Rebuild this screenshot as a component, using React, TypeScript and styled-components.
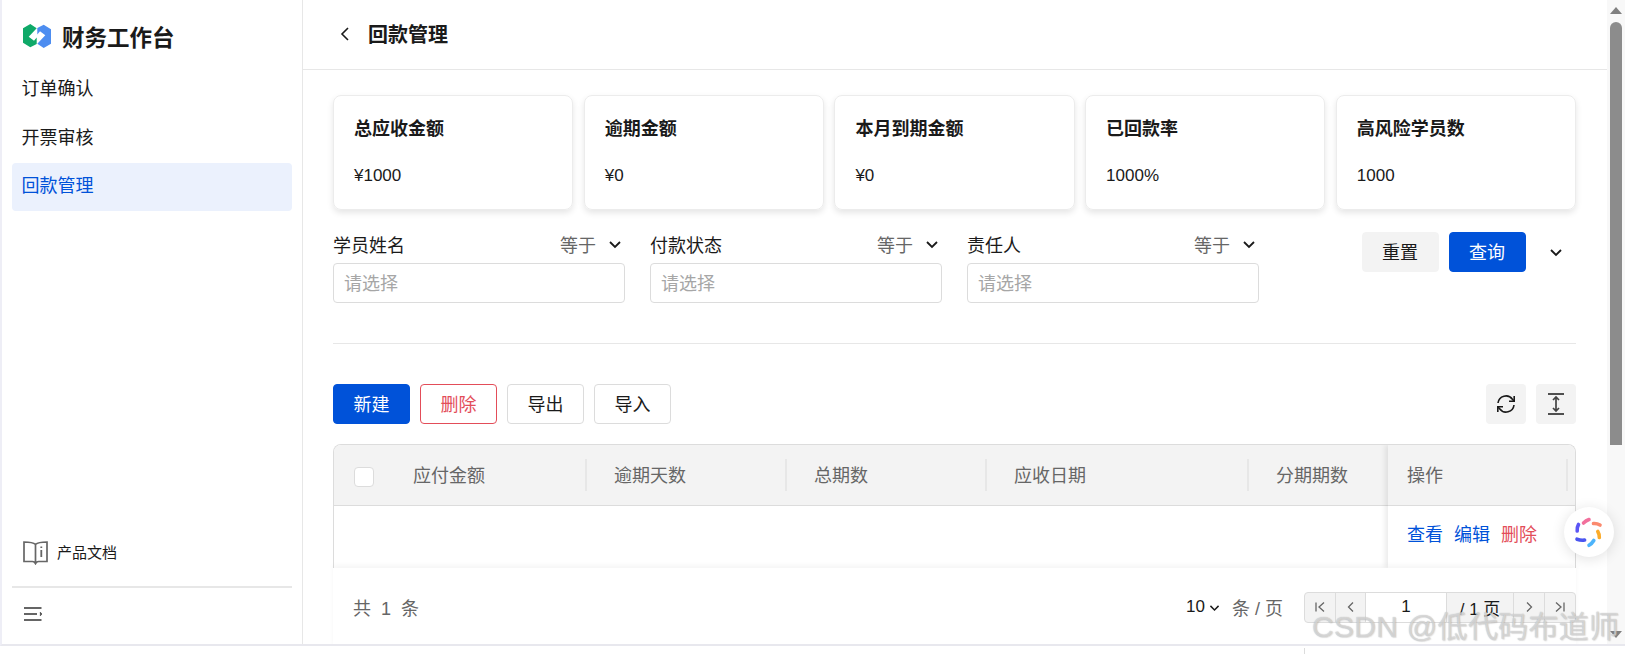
import React from "react";
import styled, { createGlobalStyle } from "styled-components";

const Global = createGlobalStyle`
  html, body { margin: 0; padding: 0; background: #fff; }
  body { font-family: "Liberation Sans", "Noto Sans CJK SC", sans-serif; color: #1a1a1a; }
  * { box-sizing: border-box; }
`;

const Page = styled.div`
  position: relative;
  width: 1625px;
  height: 654px;
  overflow: hidden;
  background: #fff;
`;
const Frame = styled.div`
  display: flex;
  height: 646px;
  border-left: 2px solid #eeeef6;
  border-bottom: 2px solid #e8e8ee;
`;
const Sidebar = styled.aside`
  width: 301px;
  flex: none;
  display: flex;
  flex-direction: column;
  border-right: 1px solid #e7e7e7;
  padding: 0 10px;
`;
const Brand = styled.div`
  display: flex;
  align-items: center;
  height: 63px;
  padding: 8px 0 0 11px;
  gap: 11px;
  font-size: 22.5px;
  font-weight: 700;
`;
const NavItem = styled.div<{ $active?: boolean }>`
  height: 48px;
  margin: ${(p) => (p.$active ? "2px 0 0" : "0 0 1px")};
  padding: 0 0 ${(p) => (p.$active ? 7 : 0)}px 9.5px;
  display: flex;
  align-items: center;
  font-size: 18px;
  border-radius: 4px;
  color: ${(p) => (p.$active ? "#0052d9" : "#1a1a1a")};
  background: ${(p) => (p.$active ? "#ebf1fd" : "transparent")};
`;
const SideFoot = styled.div`
  margin-top: auto;
`;
const DocLink = styled.div`
  display: flex;
  align-items: center;
  gap: 9px;
  padding: 0 0 21px 11px;
  font-size: 15px;
  & > span { padding-bottom: 3px; }
`;
const Collapse = styled.div`
  border-top: 2px solid #e7e7e7;
  height: 58px;
  padding: 19px 0 0 12px;
`;
const Main = styled.main`
  width: 1304px;
  flex: none;
  overflow: hidden;
`;
const Header = styled.header`
  height: 70px;
  display: flex;
  align-items: center;
  gap: 17px;
  padding: 0 0 2px 36px;
  border-bottom: 1px solid #e7e7e7;
  font-size: 20px;
  font-weight: 700;
`;
const Body = styled.div`
  padding: 25px 31px 0 30px;
`;
const Cards = styled.div`
  display: grid;
  grid-template-columns: repeat(5, 1fr);
  gap: 10.5px;
`;
const Card = styled.div`
  height: 115px;
  padding: 21px 20px 0;
  border: 1px solid #ececec;
  border-radius: 8px;
  box-shadow: 0 3px 6px rgba(0, 0, 0, 0.1);
`;
const CardTitle = styled.div`
  font-size: 18px;
  font-weight: 700;
  line-height: 24px;
`;
const CardValue = styled.div`
  font-size: 17px;
  line-height: 24px;
  margin-top: 23px;
`;
const FilterRow = styled.div`
  display: flex;
  gap: 25px;
  margin-top: 22px;
  padding-bottom: 40px;
  border-bottom: 1px solid #e7e7e7;
`;
const Filter = styled.div`
  width: 292px;
`;
const FilterHead = styled.div`
  height: 26px;
  margin-bottom: 5px;
  padding-bottom: 2px;
  display: flex;
  align-items: center;
  font-size: 18px;
`;
const Operator = styled.span`
  margin-left: auto;
  margin-right: 11px;
  color: #666;
`;
const HeadChevron = styled.span`
  display: flex;
  margin-right: 2px;
`;
const Input = styled.div`
  height: 40px;
  border: 1px solid #dcdcdc;
  border-radius: 4px;
  padding: 0 0 3px 10px;
  display: flex;
  align-items: center;
  font-size: 18px;
  color: #a6a6a6;
`;
const Actions = styled.div`
  margin-left: auto;
  display: flex;
  align-items: flex-start;
  gap: 10px;
  padding-right: 12.5px;
`;
const Button = styled.button<{ $kind?: "primary" | "danger" | "plain" | "soft" }>`
  width: 77px;
  height: 40px;
  padding: 0 0 3px;
  border-radius: 4px;
  font: inherit;
  font-size: 18px;
  border: 1px solid
    ${(p) => (p.$kind === "primary" ? "#0052d9" : p.$kind === "danger" ? "#e34d59" : p.$kind === "soft" ? "#f3f3f3" : "#dcdcdc")};
  background: ${(p) => (p.$kind === "primary" ? "#0052d9" : p.$kind === "soft" ? "#f3f3f3" : "#fff")};
  color: ${(p) => (p.$kind === "primary" ? "#fff" : p.$kind === "danger" ? "#e34d59" : "#1a1a1a")};
`;
const MoreToggle = styled.div`
  width: 16px;
  height: 40px;
  margin-left: 12px;
  display: flex;
  align-items: center;
`;
const Toolbar = styled.div`
  display: flex;
  gap: 10px;
  margin-top: 40px;
`;
const IconButton = styled.div`
  width: 40px;
  height: 40px;
  border-radius: 4px;
  background: #f3f3f3;
  display: flex;
  align-items: center;
  justify-content: center;
  &:first-of-type { margin-left: auto; }
`;
const Table = styled.div`
  margin-top: 20px;
  border: 1px solid #dcdcdc;
  border-bottom: 0;
  border-radius: 8px 8px 0 0;
  font-size: 18px;
  overflow: hidden;
  display: flex;
`;
const Scroller = styled.div`
  width: 1054px;
  flex: none;
`;
const HeadRow = styled.div`
  height: 61px;
  background: #f3f3f3;
  border-bottom: 1px solid #dcdcdc;
  display: flex;
  align-items: center;
  color: #666;
`;
const CheckCell = styled.div`
  width: 52px;
  flex: none;
  padding: 3px 0 0 20px;
`;
const Checkbox = styled.div`
  width: 20px;
  height: 20px;
  background: #fff;
  border: 1px solid #dcdcdc;
  border-radius: 4px;
`;
const HeadCell = styled.div<{ $w: number; $plain?: boolean }>`
  width: ${(p) => p.$w}px;
  flex: none;
  height: 32px;
  display: flex;
  align-items: center;
  padding: 0 0 3px 27px;
  border-right: ${(p) => (p.$plain ? "0" : "2px solid #e7e7e7")};
`;
const BodyRow = styled.div`
  height: 62px;
`;
const Fixed = styled.div`
  flex: 1;
  box-shadow: -3px 0 5px rgba(0, 0, 0, 0.08);
  z-index: 1;
`;
const FixedHead = styled(HeadRow)`
  padding-left: 19px;
  justify-content: space-between;
  padding-right: 7px;
`;
const FixedLabel = styled.span`
  padding-bottom: 3px;
`;
const Sep = styled.i`
  width: 2px;
  height: 32px;
  background: #e7e7e7;
`;
const RowActions = styled.div`
  height: 62px;
  display: flex;
  align-items: center;
  gap: 11px;
  padding: 0 0 9px 19px;
`;
const LinkText = styled.span<{ $danger?: boolean }>`
  color: ${(p) => (p.$danger ? "#e34d59" : "#0052d9")};
`;
const Footer = styled.div`
  height: 80px;
  padding: 24px 0 0 20px;
  display: flex;
  align-items: flex-start;
  font-size: 18px;
  color: #666;
  background: #fff;
  box-shadow: 0 -3px 5px rgba(0, 0, 0, 0.04);
  position: relative;
  z-index: 2;
`;
const Total = styled.span`
  word-spacing: 5px;
  line-height: 30px;
  margin-top: 2px;
`;
const PageSize = styled.div`
  margin-left: auto;
  display: flex;
  align-items: center;
  height: 30px;
  gap: 3px;
  font-size: 17px;
  color: #1a1a1a;
`;
const PerPage = styled.span`
  margin: 0 18px 0 8px;
  font-size: 18px;
  color: #666;
  white-space: nowrap;
`;
const Pager = styled.div`
  display: flex;
  height: 31px;
  border: 1px solid #dcdcdc;
  border-radius: 4px;
  background: #f3f3f3;
  color: #1a1a1a;
`;
const PagerCell = styled.div<{ $w: number; $input?: boolean; $last?: boolean }>`
  width: ${(p) => p.$w}px;
  flex: none;
  display: flex;
  align-items: center;
  justify-content: center;
  font-size: 17px;
  background: ${(p) => (p.$input ? "#fff" : "transparent")};
  border-right: ${(p) => (p.$last ? "0" : "1px solid #dcdcdc")};
`;
const ScrollTrack = styled.div`
  width: 18px;
  flex: none;
  background: #f8f8f8;
  display: flex;
  flex-direction: column;
  align-items: center;
  padding-top: 7px;
`;
const ArrowUp = styled.i`
  width: 0;
  height: 0;
  border-left: 6px solid transparent;
  border-right: 6px solid transparent;
  border-bottom: 7px solid #808080;
`;
const ArrowDown = styled.i`
  width: 0;
  height: 0;
  border-left: 6px solid transparent;
  border-right: 6px solid transparent;
  border-top: 7px solid #808080;
  margin-top: auto;
  margin-bottom: 6px;
`;
const Thumb = styled.div`
  width: 12px;
  height: 423px;
  margin-top: 8px;
  background: #8c8c8c;
  border-radius: 6px 6px 0 0;
`;
const StubLine = styled.div`
  position: absolute;
  left: 1304px;
  top: 648px;
  width: 1px;
  height: 6px;
  background: #dcdcdc;
`;
const Floating = styled.div`
  position: absolute;
  left: 1564px;
  top: 507px;
  width: 50px;
  height: 50px;
  border-radius: 50%;
  background: #fff;
  box-shadow: 0 2px 14px rgba(0, 0, 0, 0.12);
  display: flex;
  z-index: 5;
`;
const Watermark = styled.div`
  position: absolute;
  left: 1312px;
  top: 609px;
  font-size: 30px;
  letter-spacing: 0.3px;
  line-height: 36px;
  white-space: nowrap;
  color: rgba(232, 232, 232, 0.65);
  text-shadow: 0 0 1px rgba(120, 120, 120, 0.55), 1px 1px 1px rgba(150, 150, 150, 0.25);
  z-index: 6;
`;

const Chevron = ({ size = 16 }: { size?: number }) => (
  <svg width={size} height={size} viewBox="0 0 16 16" fill="none" stroke="#1a1a1a" strokeWidth="1.8">
    <path d="M3 6l5 5 5-5" />
  </svg>
);
const Logo = () => (
  <svg width="28" height="24" viewBox="0 0 28 24">
    <path d="M7.3 0L13.7 4.3 5.7 12.7 11 16.7 13.7 13.5V20L7.3 23.3 0 18.7V4.3Z" fill="#0fa968" />
    <path d="M20.7 24L14.3 19.7 22.3 11.3 17 7.3 14.3 10.5V4L20.7 0.7 28 5.3V19.7Z" fill="#4d8df0" />
  </svg>
);
const Book = () => (
  <svg width="25" height="24" viewBox="0 0 25 24" fill="none" stroke="#666" strokeWidth="1.7">
    <path d="M12.5 3.5C10.5 1.6 7 1 1 1V20.5H9.5C11 20.5 12 21.5 12.5 22.5C13 21.5 14 20.5 15.5 20.5H24V1C18 1 14.5 1.6 12.5 3.5ZM12.5 3.5V21" />
    <path d="M18.3 5.5V7M18.3 9V16" strokeWidth="1.8" />
  </svg>
);
const MenuLines = () => (
  <svg width="18" height="14" viewBox="0 0 18 14" fill="none" stroke="#333" strokeWidth="1.7" style={{ display: "block" }}>
    <path d="M0 1H17.5M0 7H13M0 13H17.5" />
    <path d="M16 5.5L17.5 7 16 8.5" strokeWidth="1.2" />
  </svg>
);
const Back = () => (
  <svg width="12" height="16" viewBox="0 0 12 16" fill="none" stroke="#1a1a1a" strokeWidth="1.6">
    <path d="M9 2L3 8l6 6" />
  </svg>
);
const Refresh = () => (
  <svg width="20" height="20" viewBox="0 0 20 20" fill="none" stroke="#1a1a1a" strokeWidth="1.6">
    <path d="M2 9A8 8 0 0 1 16.4 5.2L18 7" />
    <path d="M18.2 2V7.2H13" />
    <path d="M18 11A8 8 0 0 1 3.6 14.8L2 13" />
    <path d="M1.8 18V12.8H7" />
  </svg>
);
const Expand = () => (
  <svg width="18" height="22" viewBox="0 0 18 22" fill="none" stroke="#444" strokeWidth="1.5">
    <path d="M1 1H17M1 21H17" stroke="#1a1a1a" />
    <path d="M9 4V18M6 7l3-3 3 3M6 15l3 3 3-3" strokeWidth="1.7" />
  </svg>
);
const PagerIcon = ({ d }: { d: string }) => (
  <svg width="14" height="14" viewBox="0 0 14 14" fill="none" stroke="#666" strokeWidth="1.3">
    <path d={d} />
  </svg>
);
const Spark = () => (
  <svg width="50" height="50" viewBox="0 0 50 50" fill="none" strokeWidth="3.6" strokeLinecap="round">
    <path d="M19.5 16Q22 13.5 25 12.5" stroke="#f2709c" />
    <path d="M29.5 16.5Q33 16.2 36 18" stroke="#fb8a6e" />
    <path d="M33.8 24.5Q35.6 27.5 35.3 30.5" stroke="#fbab2a" />
    <path d="M25 38.3Q28 36.5 29.8 33.5" stroke="#4db4fb" />
    <path d="M13 32.2Q17 33.6 20.6 33" stroke="#4a55f0" />
    <path d="M14.5 17.5Q12.8 20.5 13.2 24" stroke="#5b55f5" />
  </svg>
);

const cards = [
  ["总应收金额", "¥1000"],
  ["逾期金额", "¥0"],
  ["本月到期金额", "¥0"],
  ["已回款率", "1000%"],
  ["高风险学员数", "1000"],
];
const filters = ["学员姓名", "付款状态", "责任人"];

export default function App() {
  return (
    <Page>
      <Global />
      <Frame>
        <Sidebar>
          <Brand>
            <Logo />
            财务工作台
          </Brand>
          <NavItem>订单确认</NavItem>
          <NavItem>开票审核</NavItem>
          <NavItem $active>回款管理</NavItem>
          <SideFoot>
            <DocLink>
              <Book />
              <span>产品文档</span>
            </DocLink>
            <Collapse>
              <MenuLines />
            </Collapse>
          </SideFoot>
        </Sidebar>
        <Main>
          <Header>
            <Back />
            回款管理
          </Header>
          <Body>
            <Cards>
              {cards.map(([t, v]) => (
                <Card key={t}>
                  <CardTitle>{t}</CardTitle>
                  <CardValue>{v}</CardValue>
                </Card>
              ))}
            </Cards>
            <FilterRow>
              {filters.map((f) => (
                <Filter key={f}>
                  <FilterHead>
                    {f}
                    <Operator>等于</Operator>
                    <HeadChevron>
                      <Chevron />
                    </HeadChevron>
                  </FilterHead>
                  <Input>请选择</Input>
                </Filter>
              ))}
              <Actions>
                <Button $kind="soft">重置</Button>
                <Button $kind="primary">查询</Button>
                <MoreToggle>
                  <Chevron />
                </MoreToggle>
              </Actions>
            </FilterRow>
            <Toolbar>
              <Button $kind="primary">新建</Button>
              <Button $kind="danger">删除</Button>
              <Button>导出</Button>
              <Button>导入</Button>
              <IconButton>
                <Refresh />
              </IconButton>
              <IconButton>
                <Expand />
              </IconButton>
            </Toolbar>
            <Table>
              <Scroller>
                <HeadRow>
                  <CheckCell>
                    <Checkbox />
                  </CheckCell>
                  <HeadCell $w={201}>应付金额</HeadCell>
                  <HeadCell $w={200}>逾期天数</HeadCell>
                  <HeadCell $w={200}>总期数</HeadCell>
                  <HeadCell $w={262}>应收日期</HeadCell>
                  <HeadCell $w={139} $plain>分期期数</HeadCell>
                </HeadRow>
                <BodyRow />
              </Scroller>
              <Fixed>
                <FixedHead>
                  <FixedLabel>操作</FixedLabel>
                  <Sep />
                </FixedHead>
                <RowActions>
                  <LinkText>查看</LinkText>
                  <LinkText>编辑</LinkText>
                  <LinkText $danger>删除</LinkText>
                </RowActions>
              </Fixed>
            </Table>
            <Footer>
              <Total>共 1 条</Total>
              <PageSize>
                10
                <Chevron size={13} />
                <PerPage>条 / 页</PerPage>
                <Pager>
                  <PagerCell $w={31}>
                    <PagerIcon d="M3 2.5V11.5M11 2.5L6 7l5 4.5" />
                  </PagerCell>
                  <PagerCell $w={30}>
                    <PagerIcon d="M9 2.5L4.5 7 9 11.5" />
                  </PagerCell>
                  <PagerCell $w={81} $input>1</PagerCell>
                  <PagerCell $w={67}>/ 1 页</PagerCell>
                  <PagerCell $w={31}>
                    <PagerIcon d="M5 2.5L9.5 7 5 11.5" />
                  </PagerCell>
                  <PagerCell $w={30} $last>
                    <PagerIcon d="M11 2.5V11.5M3 2.5L8 7l-5 4.5" />
                  </PagerCell>
                </Pager>
              </PageSize>
            </Footer>
          </Body>
        </Main>
        <ScrollTrack>
          <ArrowUp />
          <Thumb />
          <ArrowDown />
        </ScrollTrack>
      </Frame>
      <StubLine />
      <Floating>
        <Spark />
      </Floating>
      <Watermark>CSDN @低代码布道师</Watermark>
    </Page>
  );
}
